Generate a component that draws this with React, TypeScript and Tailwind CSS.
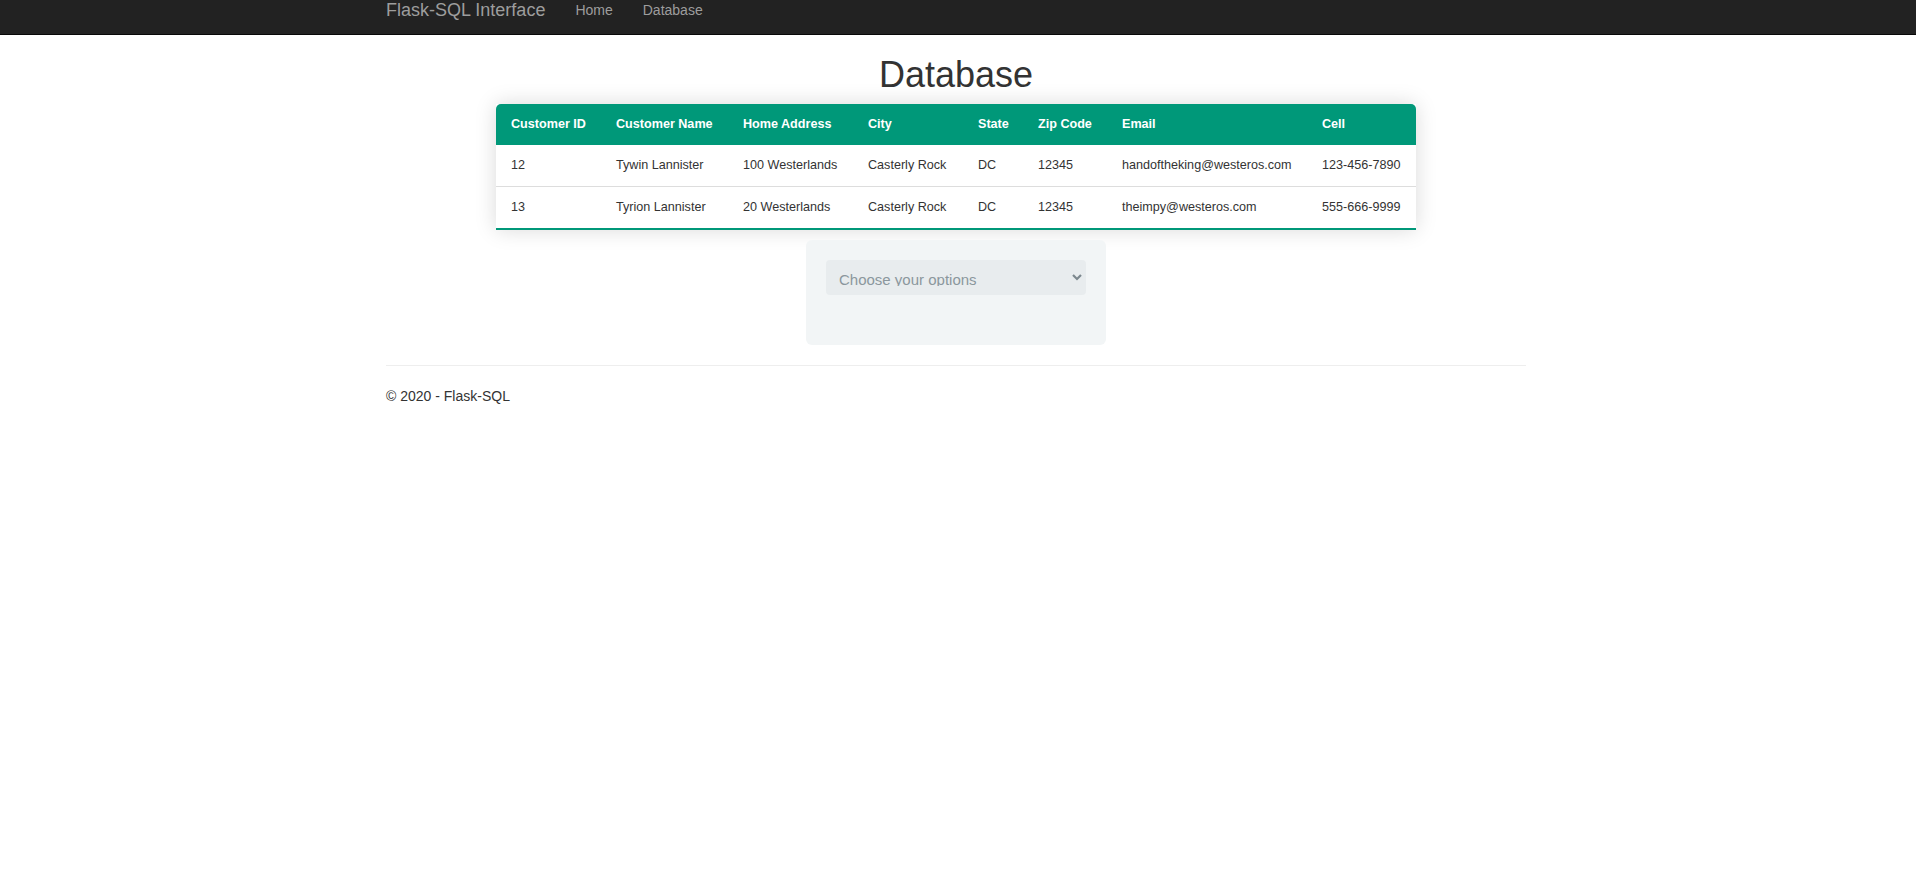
const font = { fontFamily: '"Liberation Sans", Arial, Helvetica, sans-serif' }

const columns = [
  { label: "Customer ID", w: "w-[105px]" },
  { label: "Customer Name", w: "w-[127px]" },
  { label: "Home Address", w: "w-[125px]" },
  { label: "City", w: "w-[110px]" },
  { label: "State", w: "w-[60px]" },
  { label: "Zip Code", w: "w-[84px]" },
  { label: "Email", w: "w-[200px]" },
  { label: "Cell", w: "w-[109px]" },
]

const customers = [
  ["12", "Tywin Lannister", "100 Westerlands", "Casterly Rock", "DC", "12345", "handoftheking@westeros.com", "123-456-7890"],
  ["13", "Tyrion Lannister", "20 Westerlands", "Casterly Rock", "DC", "12345", "theimpy@westeros.com", "555-666-9999"],
]

function Navbar() {
  return (
    <nav className="h-[35px] bg-[#222222] border-b border-[#080808] pr-[4px]">
      <div className="mx-auto w-[1170px] px-[15px] flex items-start">
        <a className="text-[18px] leading-[20px] text-[#9d9d9d] pr-[15px]">Flask-SQL Interface</a>
        <ul className="flex">
          <li>
            <a className="block px-[15px] text-[14px] leading-[20px] text-[#9d9d9d]">Home</a>
          </li>
          <li>
            <a className="block px-[15px] text-[14px] leading-[20px] text-[#9d9d9d]">Database</a>
          </li>
        </ul>
      </div>
    </nav>
  )
}

function CustomerTable() {
  return (
    <table className="mx-auto w-[920px] table-fixed border-collapse text-[12.6px] leading-[17px] text-left shadow-[0_0_20px_rgba(0,0,0,0.15)]">
      <thead>
        <tr className="bg-[#009879] text-white">
          {columns.map((c, i) => (
            <th
              key={c.label}
              className={`${c.w} px-[15px] py-3 font-bold ${i === 0 ? "rounded-tl-[5px]" : ""} ${i === columns.length - 1 ? "rounded-tr-[5px]" : ""}`}
            >
              {c.label}
            </th>
          ))}
        </tr>
      </thead>
      <tbody className="text-[#333333]">
        {customers.map((row, r) => (
          <tr
            key={row[0]}
            className={r === customers.length - 1 ? "border-b-2 border-[#009879]" : "border-b border-[#dddddd]"}
          >
            {row.map((cell, i) => (
              <td key={i} className="px-[15px] py-3 whitespace-nowrap">
                {cell}
              </td>
            ))}
          </tr>
        ))}
      </tbody>
    </table>
  )
}

function OptionsPanel() {
  return (
    <div className="mx-auto mt-[10px] w-[300px] h-[105px] rounded-[6px] bg-[#f2f5f6] p-5">
      <div className="relative h-[35px] rounded-[4px] bg-[#e8ecee] pl-[13px] pr-[30px]">
        <div className="h-[26px] overflow-hidden text-[15px] leading-[40px] text-[#8b979d] whitespace-nowrap">
          Choose your options
        </div>
        <svg
          className="absolute right-[4px] top-[14px]"
          width="10"
          height="7"
          viewBox="0 0 10 7"
          fill="none"
        >
          <polyline points="1,1 5,5 9,1" stroke="#7c888e" strokeWidth="2.2" />
        </svg>
      </div>
    </div>
  )
}

export default function App() {
  return (
    <div className="min-h-screen bg-white text-[#333333]" style={font}>
      <Navbar />
      <div className="pr-[4px]">
        <div className="mx-auto w-[1170px] px-[15px]">
          <h1 className="mt-[20px] mb-[9px] h-[40px] text-center text-[36px] leading-[40px] font-medium text-[#333333]">
            Database
          </h1>
          <CustomerTable />
          <OptionsPanel />
          <hr className="mt-[20px] mb-[20px] border-t border-[#eeeeee]" />
          <footer>
            <p className="text-[14px] leading-[20px]">© 2020 - Flask-SQL</p>
          </footer>
        </div>
      </div>
    </div>
  )
}
